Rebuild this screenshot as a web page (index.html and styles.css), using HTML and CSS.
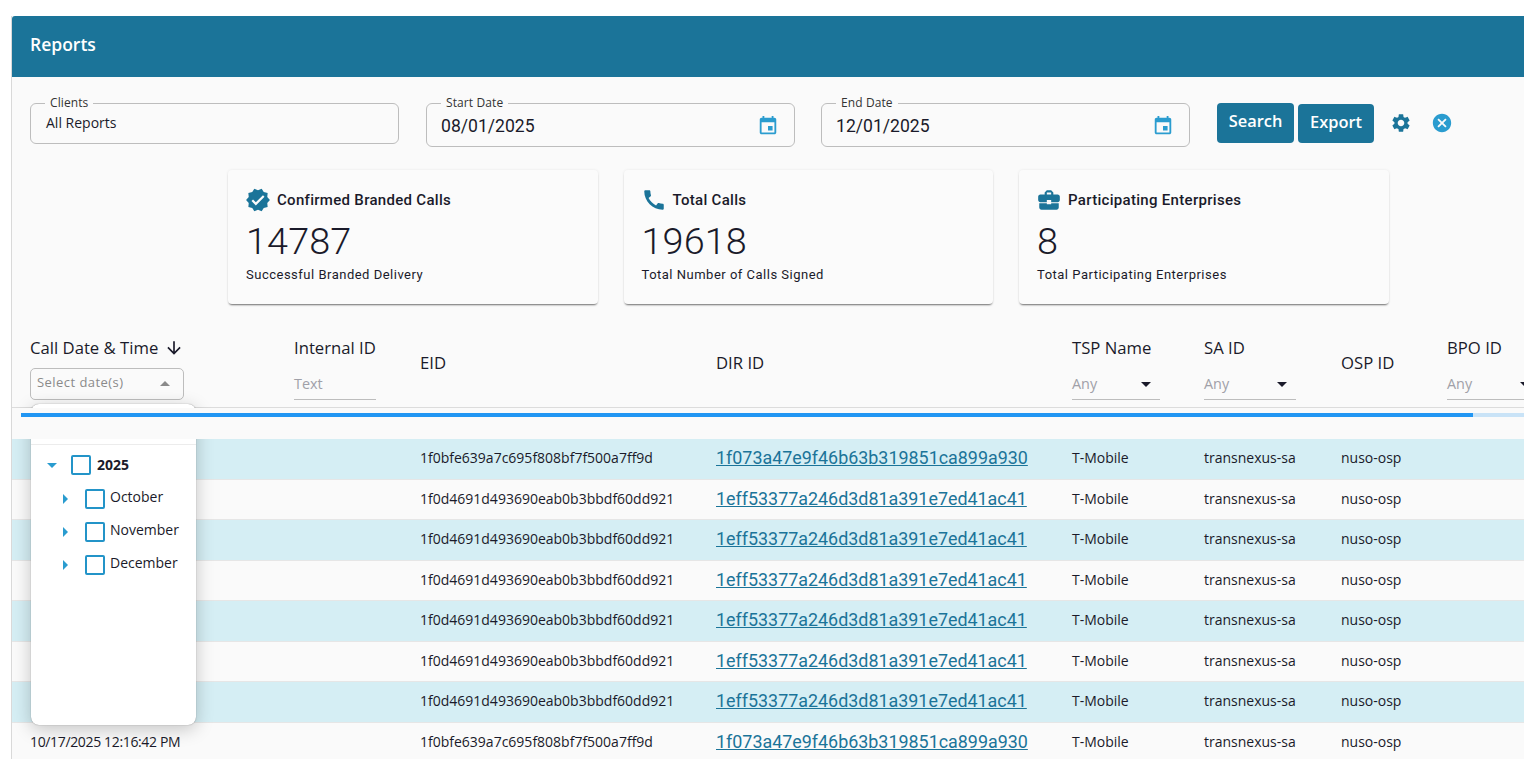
FILE: index.html
```html
<!DOCTYPE html>
<html lang="en">
<head>
<meta charset="utf-8">
<title>Reports</title>
<link rel="stylesheet" href="styles.css">
</head>
<body>
<main class="panel">
  <header class="panel-head">Reports</header>
  <section class="filters">
    <fieldset class="field field-client"><legend>Clients</legend><span class="field-value">All Reports</span></fieldset>
    <fieldset class="field field-date"><legend>Start Date</legend><span class="date-value">08/01/2025</span>
      <svg class="cal" viewBox="0 0 24 24"><path d="M17 12h-5v5h5v-5zM16 1v2H8V1H6v2H5c-1.11 0-1.99.9-1.99 2L3 19c0 1.1.89 2 2 2h14c1.1 0 2-.9 2-2V5c0-1.1-.9-2-2-2h-1V1h-2zm3 18H5V8h14v11z"/></svg></fieldset>
    <fieldset class="field field-date"><legend>End Date</legend><span class="date-value">12/01/2025</span>
      <svg class="cal" viewBox="0 0 24 24"><path d="M17 12h-5v5h5v-5zM16 1v2H8V1H6v2H5c-1.11 0-1.99.9-1.99 2L3 19c0 1.1.89 2 2 2h14c1.1 0 2-.9 2-2V5c0-1.1-.9-2-2-2h-1V1h-2zm3 18H5V8h14v11z"/></svg></fieldset>
    <div class="actions">
      <button class="btn btn-search">Search</button>
      <button class="btn btn-export">Export</button>
      <svg class="gear" viewBox="0 0 24 24"><path d="M19.14 12.94c.04-.3.06-.61.06-.94 0-.32-.02-.64-.07-.94l2.03-1.58c.18-.14.23-.41.12-.61l-1.92-3.32c-.12-.22-.37-.29-.59-.22l-2.39.96c-.5-.38-1.03-.7-1.62-.94l-.36-2.54c-.04-.24-.24-.41-.48-.41h-3.84c-.24 0-.43.17-.47.41l-.36 2.54c-.59.24-1.13.57-1.62.94l-2.39-.96c-.22-.08-.47 0-.59.22L2.74 8.87c-.12.21-.08.47.12.61l2.03 1.58c-.05.3-.09.63-.09.94s.02.64.07.94l-2.03 1.58c-.18.14-.23.41-.12.61l1.92 3.32c.12.22.37.29.59.22l2.39-.96c.5.38 1.03.7 1.62.94l.36 2.54c.05.24.24.41.48.41h3.84c.24 0 .44-.17.47-.41l.36-2.54c.59-.24 1.13-.56 1.62-.94l2.39.96c.22.08.47 0 .59-.22l1.92-3.32c.12-.22.07-.47-.12-.61l-2.01-1.58zM12 15.6c-1.98 0-3.6-1.62-3.6-3.6s1.62-3.6 3.6-3.6 3.6 1.62 3.6 3.6-1.62 3.6-3.6 3.6z"/></svg>
      <svg class="cancel" viewBox="0 0 24 24"><path d="M12 2C6.47 2 2 6.47 2 12s4.47 10 10 10 10-4.47 10-10S17.53 2 12 2zm5 13.59L15.59 17 12 13.41 8.41 17 7 15.59 10.59 12 7 8.41 8.41 7 12 10.59 15.59 7 17 8.41 13.41 12 17 15.59z"/></svg>
    </div>
  </section>
  <section class="stats">
    <article class="stat">
      <h2 class="stat-title"><svg class="stat-icon" viewBox="0 0 24 24"><path d="M23 12l-2.44-2.78.34-3.68-3.61-.82-1.89-3.18L12 3 8.6 1.54 6.71 4.72l-3.61.81.34 3.68L1 12l2.44 2.78-.34 3.69 3.61.82 1.89 3.18L12 21l3.4 1.46 1.89-3.18 3.61-.82-.34-3.68L23 12zm-13 5l-4-4 1.41-1.41L10 14.17l6.59-6.59L18 9l-8 8z"/></svg>Confirmed Branded Calls</h2>
      <div class="stat-num">14787</div>
      <div class="stat-sub">Successful Branded Delivery</div>
    </article>
    <article class="stat">
      <h2 class="stat-title"><svg class="stat-icon" viewBox="0 0 24 24"><path d="M20.01 15.38c-1.23 0-2.42-.2-3.53-.56-.35-.12-.74-.03-1.01.24l-1.57 1.97c-2.83-1.35-5.48-3.9-6.89-6.83l1.95-1.66c.27-.28.35-.67.24-1.02-.37-1.11-.56-2.3-.56-3.53 0-.54-.45-.99-.99-.99H4.19C3.65 3 3 3.24 3 3.99 3 13.28 10.73 21 20.01 21c.71 0 .99-.63.99-1.18v-3.45c0-.54-.45-.99-.99-.99z"/></svg>Total Calls</h2>
      <div class="stat-num">19618</div>
      <div class="stat-sub">Total Number of Calls Signed</div>
    </article>
    <article class="stat">
      <h2 class="stat-title"><svg class="stat-icon" viewBox="0 0 24 24"><path d="M10 16v-1H3.01L3 19c0 1.11.89 2 2 2h14c1.11 0 2-.89 2-2v-4h-7v1h-4zm10-9h-4.01V5l-2-2h-4l-2 2v2H4c-1.1 0-2 .9-2 2v3c0 1.11.89 2 2 2h6v-2h4v2h6c1.1 0 2-.9 2-2V9c0-1.1-.9-2-2-2zm-6 0h-4V5h4v2z"/></svg>Participating Enterprises</h2>
      <div class="stat-num">8</div>
      <div class="stat-sub">Total Participating Enterprises</div>
    </article>
  </section>
  <section class="table">
    <div class="cols thead">
      <div class="th">
        <div class="th-label">Call Date &amp; Time <svg class="sort" viewBox="0 0 24 24"><path d="M20 12l-1.41-1.41L13 16.17V4h-2v12.17l-5.58-5.59L4 12l8 8 8-8z"/></svg></div>
        <div class="date-select"><span>Select date(s)</span><i class="caret-up"></i></div>
      </div>
      <div class="th"><div class="th-label">Internal ID</div><div class="filter filter-text">Text</div></div>
      <div class="th th-mid"><div class="th-label">EID</div></div>
      <div class="th th-mid"><div class="th-label">DIR ID</div></div>
      <div class="th"><div class="th-label">TSP Name</div><div class="filter filter-tsp">Any<i class="caret-down"></i></div></div>
      <div class="th"><div class="th-label">SA ID</div><div class="filter filter-sa">Any<i class="caret-down"></i></div></div>
      <div class="th th-mid"><div class="th-label">OSP ID</div></div>
      <div class="th"><div class="th-label">BPO ID</div><div class="filter filter-bpo">Any<i class="caret-down"></i></div></div>
    </div>
    <div class="progress-band"><div class="progress"><div class="progress-fill"></div></div></div>
    <div class="cols row odd"><div></div><div></div><div>1f0bfe639a7c695f808bf7f500a7ff9d</div><div><a href="#">1f073a47e9f46b63b319851ca899a930</a></div><div>T-Mobile</div><div>transnexus-sa</div><div>nuso-osp</div><div></div></div>
    <div class="cols row"><div></div><div></div><div>1f0d4691d493690eab0b3bbdf60dd921</div><div><a href="#">1eff53377a246d3d81a391e7ed41ac41</a></div><div>T-Mobile</div><div>transnexus-sa</div><div>nuso-osp</div><div></div></div>
    <div class="cols row odd"><div></div><div></div><div>1f0d4691d493690eab0b3bbdf60dd921</div><div><a href="#">1eff53377a246d3d81a391e7ed41ac41</a></div><div>T-Mobile</div><div>transnexus-sa</div><div>nuso-osp</div><div></div></div>
    <div class="cols row"><div></div><div></div><div>1f0d4691d493690eab0b3bbdf60dd921</div><div><a href="#">1eff53377a246d3d81a391e7ed41ac41</a></div><div>T-Mobile</div><div>transnexus-sa</div><div>nuso-osp</div><div></div></div>
    <div class="cols row odd"><div></div><div></div><div>1f0d4691d493690eab0b3bbdf60dd921</div><div><a href="#">1eff53377a246d3d81a391e7ed41ac41</a></div><div>T-Mobile</div><div>transnexus-sa</div><div>nuso-osp</div><div></div></div>
    <div class="cols row"><div></div><div></div><div>1f0d4691d493690eab0b3bbdf60dd921</div><div><a href="#">1eff53377a246d3d81a391e7ed41ac41</a></div><div>T-Mobile</div><div>transnexus-sa</div><div>nuso-osp</div><div></div></div>
    <div class="cols row odd"><div></div><div></div><div>1f0d4691d493690eab0b3bbdf60dd921</div><div><a href="#">1eff53377a246d3d81a391e7ed41ac41</a></div><div>T-Mobile</div><div>transnexus-sa</div><div>nuso-osp</div><div></div></div>
    <div class="cols row"><div class="cell-date">10/17/2025 12:16:42 PM</div><div></div><div>1f0bfe639a7c695f808bf7f500a7ff9d</div><div><a href="#">1f073a47e9f46b63b319851ca899a930</a></div><div>T-Mobile</div><div>transnexus-sa</div><div>nuso-osp</div><div></div></div>
    <div class="popover">
      <div class="tree">
        <div class="node node-year"><i class="tw tw-open"></i><span class="box"></span><b>2025</b></div>
        <div class="node node-month"><i class="tw tw-closed"></i><span class="box"></span><span>October</span></div>
        <div class="node node-month"><i class="tw tw-closed"></i><span class="box"></span><span>November</span></div>
        <div class="node node-month"><i class="tw tw-closed"></i><span class="box"></span><span>December</span></div>
      </div>
    </div>
  </section>
</main>
</body>
</html>
```
FILE: styles.css
```css
* { box-sizing: border-box; }
html, body { margin: 0; height: 759px; overflow: hidden; background: #fff; }
body { padding: 16px 0 0 11px; font-family: "Open Sans", "Noto Sans", sans-serif; color: #1a1a2a; }
.panel { width: 1513px; background: #fafafa; border-left: 1px solid #d9d9d9; overflow: hidden; }
.panel-head { height: 61px; background: #1b7499; color: #fff; font-weight: 600; font-size: 17.5px; line-height: 57px; padding-left: 18px; border-radius: 3px 0 0 0; }

.filters { display: flex; align-items: flex-start; height: 93px; padding: 19px 0 0 18px; }
.field { position: relative; margin: 0; border: 1px solid #bdbdbd; border-radius: 6px; padding: 0 15px; min-width: 0; width: 369px; }
.field legend { font-size: 12px; line-height: 14px; padding: 0 5px; color: #333; letter-spacing: .1px; margin-left: -1px; }
.field-client { height: 48px; margin-right: 27px; }
.field-date { height: 51px; margin-right: 26px; }
.field-date + .field-date { margin-right: 27px; }
.field-value { display: block; font-size: 14px; line-height: 18px; margin-top: 4px; }
.date-value { display: block; font-family: Roboto, sans-serif; font-size: 17.6px; line-height: 22px; margin: 5px 0 0 -1px; }
.cal { position: absolute; right: 15px; top: 5px; width: 22px; height: 22px; fill: #2a9ccf; }
.actions { display: flex; align-items: flex-start; padding-top: 7px; }
.btn { border: 0; border-radius: 4px; background: #1b7499; color: #fff; font-family: inherit; font-weight: 600; font-size: 16.4px; height: 39px; padding: 0 0 5px; }
.btn-search { width: 77px; height: 40px; margin-right: 4px; }
.btn-export { width: 76px; margin-top: 1px; }
.gear { width: 22px; height: 22px; margin: 9px 0 0 16px; fill: #1b7499; }
.cancel { width: 22px; height: 22px; margin: 9px 0 0 19px; fill: #2a9ccf; }

.stats { display: flex; gap: 26px; padding-left: 216px; height: 160px; }
.stat { width: 369.5px; height: 134px; background: #fbfbfb; border-radius: 4px; padding: 18px 18px 0; box-shadow: 0 2px 2px -1px rgba(0,0,0,.55), 0 0 3px rgba(0,0,0,.08); font-family: Roboto, sans-serif; }
.stat-title { display: flex; align-items: center; gap: 6px; margin: 0; height: 24px; font-size: 15px; font-weight: 500; letter-spacing: .3px; }
.stat-icon { width: 26px; height: 26px; fill: #1b7499; flex: none; margin-left: -1px; }
.stat-num { font-size: 37.8px; font-weight: 300; letter-spacing: .1px; line-height: 42px; margin-top: 8px; }
.stat-sub { font-size: 13px; line-height: 16px; margin-top: 5px; letter-spacing: .5px; }

.table { position: relative; }
.cols { display: grid; grid-template-columns: 264px 126px 296px 356px 132px 137px 106px 180px; padding-left: 18px; }
.thead { height: 78px; border-bottom: 1px solid #dcdcdc; }
.th { padding-top: 6px; }
.th-mid { padding-top: 21px; }
.th-label { font-weight: 500; font-size: 16.7px; line-height: 24px; display: flex; align-items: center; white-space: nowrap; }
.sort { width: 20px; height: 20px; margin-left: 6px; fill: #1a1a2a; }
.date-select { position: relative; width: 154px; height: 32px; margin-top: 8px; border: 1px solid #bdbdbd; border-radius: 5px; background: #fafafa; font-size: 13px; font-weight: 500; letter-spacing: .45px; line-height: 27px; padding-left: 6px; color: #8a8a8a; }
.caret-up { position: absolute; right: 13px; top: 12px; border: 5px solid transparent; border-top: 0; border-bottom: 5px solid #8a8a8a; }
.filter { position: relative; height: 32px; margin-top: 8px; border-bottom: 1px solid #bdbdbd; color: #a0a0a8; font-size: 14.4px; line-height: 31px; font-weight: 400; }
.filter-text { width: 82px; }
.filter-tsp { width: 88px; }
.filter-sa { width: 92px; }
.filter-bpo { width: 92px; }
.caret-down { position: absolute; right: 9px; top: 14px; border: 5.5px solid transparent; border-bottom: 0; border-top: 5.5px solid #1a1a2a; }

.progress-band { position: relative; z-index: 2; height: 31px; background: #fafafa; padding: 5px 0 0 9px; }
.progress { height: 4px; background: #c9e3f7; }
.progress-fill { width: 1452px; height: 100%; background: #2196f3; }

.row { height: 40.5px; align-items: center; font-size: 14px; border-bottom: 1px solid #e6e6e6; white-space: nowrap; padding-bottom: 2px; }
.row.odd { background: #d5eef4; }
.row a { font-family: Roboto, sans-serif; font-size: 17.9px; color: #1b7499; text-decoration: underline; }
.cell-date { letter-spacing: -.35px; }

.popover { position: absolute; z-index: 1; left: 19px; top: 74px; width: 165px; height: 321px; background: #fff; border-radius: 8px; box-shadow: 0 0 1px rgba(0,0,0,.5), 0 4px 18px rgba(0,0,0,.22); padding-top: 40px; }
.tree { border-top: 1px solid #ececec; padding-top: 8px; }
.node { display: flex; align-items: center; height: 33px; font-size: 14px; }
.node-year { padding-left: 16px; height: 24px; margin-bottom: 5px; }
.node-month { padding-left: 32px; }
.node span:last-child { margin-top: -4px; }
.node b { font-weight: 700; margin-left: 6px; font-size: 14px; margin-top: -1px; }
.node-month span:last-child { margin-left: 5px; }
.box { width: 20px; height: 20px; border: 2px solid #2394c8; border-radius: 2px; background: #fff; margin-left: 14px; flex: none; }
.node-month .box { margin-left: 17px; }
.tw { width: 0; height: 0; flex: none; }
.tw-open { border: 5px solid transparent; border-bottom: 0; border-top: 5px solid #2a9ccf; }
.tw-closed { border: 5px solid transparent; border-right: 0; border-left: 5px solid #2a9ccf; }
```
